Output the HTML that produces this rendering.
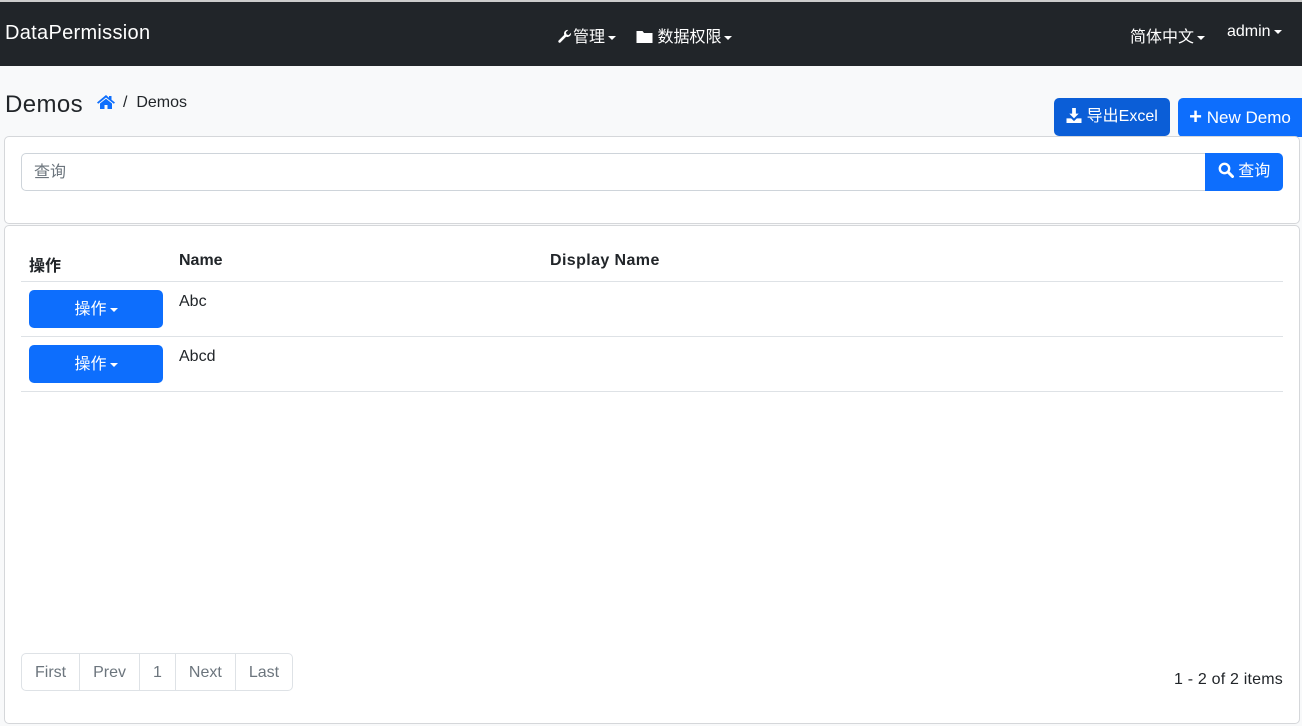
<!DOCTYPE html>
<html><head><meta charset="utf-8"><style>
*{box-sizing:border-box;margin:0;padding:0}
body{width:1302px;height:726px;background:#f8f9fa;font-family:"Liberation Sans","Noto Sans CJK SC",sans-serif;color:#212529;position:relative;overflow:hidden;font-size:16px}
.top{position:absolute;left:0;top:0;width:1302px;height:2px;background:#ccc}
.nav{position:absolute;left:0;top:2px;width:1302px;height:64px;background:#212529;color:#fff}
.nav span{position:absolute;top:22px;font-size:16px;white-space:nowrap}
.caret{display:inline-block;width:0;height:0;border-left:4px solid transparent;border-right:4px solid transparent;border-top:4px solid #fff;vertical-align:middle;margin-left:3px}
.btn{position:absolute;border-radius:5px;color:#fff;font-size:16px;text-align:center;line-height:38px}
.card{position:absolute;background:#fff;border:1px solid #d5d7da;border-radius:5px}
.pg{position:absolute;left:21px;top:653px;height:38px;display:flex;border:1px solid #dee2e6;border-radius:5px;background:#fff}
.pg div{padding:0 13px;line-height:36px;color:#6c757d;border-left:1px solid #dee2e6}
.pg div:first-child{border-left:none}
.row{position:absolute;left:21px;width:1262px;border-bottom:1px solid #dee2e6}
.ob{position:absolute;left:29px;width:134px;height:38px;background:#0d6efd;border-radius:5px;color:#fff;text-align:center;line-height:38px;font-size:16px}
</style></head><body>
<div class="top"></div>
<div class="nav">
<span style="left:5px;top:20px;font-size:20px;letter-spacing:0.3px">DataPermission</span>
<span style="left:556px;top:21px"><svg width="17" height="15" viewBox="0 0 16 16" style="vertical-align:-2px"><path d="M15 4.5a4 4 0 0 1-5.3 3.8L3.5 14.5a1.5 1.5 0 0 1-2-2l6.2-6.2A4 4 0 0 1 12 1l-2.5 2.5.7 2.3 2.3.7L15 4z" fill="#fff"/></svg>管理<i class="caret"></i></span>
<span style="left:636px;top:21px"><svg width="17" height="14" viewBox="0 0 16 14" style="vertical-align:-1px"><path d="M0 2h6l1.5 2H16v10H0z" fill="#fff"/></svg> 数据权限<i class="caret"></i></span>
<span style="left:1130px;top:21px">简体中文<i class="caret"></i></span>
<span style="left:1227px;top:21px">admin<i class="caret"></i></span>
</div>
<div style="position:absolute;left:5px;top:91px;font-size:24px;letter-spacing:0.4px">Demos</div>
<svg style="position:absolute;left:96px;top:94px" width="20" height="16" viewBox="0 0 20 16"><path d="M10 1L1 8.5l1.2 1.2L10 3.5l7.8 6.2L19 8.5 15.5 5.7V2h-2.5v1.7z M4 9.5V15h4.5v-4h3v4H16V9.5L10 4.8z" fill="#0d6efd"/></svg>
<div style="position:absolute;left:123px;top:94px;font-size:16px;color:#212529">/ &nbsp;Demos</div>
<div class="btn" style="left:1054px;top:98px;width:116px;background:#0b5ed7"><svg width="16" height="15" viewBox="0 0 16 16" style="vertical-align:-2px"><path d="M6 0h4v6h3l-5 5-5-5h3z M0 11h5l3 3 3-3h5v5H0z" fill="#fff"/></svg> 导出Excel</div>
<div class="btn" style="left:1178px;top:98px;width:124px;background:#0d6efd;border-radius:5px 0 0 5px;font-size:17px"><b style="font-size:22px;vertical-align:-1px">+</b> New Demo</div>
<div class="card" style="left:4px;top:136px;width:1296px;height:88px"></div>
<div style="position:absolute;left:21px;top:153px;width:1186px;height:38px;border:1px solid #ced4da;border-radius:5px 0 0 5px;background:#fff;color:#6c757d;line-height:38px;padding-left:12px;font-size:16px">查询</div>
<div class="btn" style="left:1205px;top:153px;width:78px;background:#0d6efd;border-radius:0 5px 5px 0"><svg width="16" height="16" viewBox="0 0 16 16" style="vertical-align:-2px"><circle cx="6.5" cy="6.5" r="4.7" fill="none" stroke="#fff" stroke-width="2.4"/><path d="M10 10l4.5 4.5" stroke="#fff" stroke-width="3" stroke-linecap="round"/></svg> 查询</div>
<div class="card" style="left:4px;top:225px;width:1296px;height:499px"></div>
<div class="row" style="top:244px;height:38px;font-weight:bold">
<span style="position:absolute;left:8px;top:8px">操作</span><span style="position:absolute;left:158px;top:8px">Name</span><span style="position:absolute;left:529px;top:8px;letter-spacing:0.4px">Display Name</span></div>
<div class="row" style="top:282px;height:55px"><span style="position:absolute;left:158px;top:11px">Abc</span></div>
<div class="row" style="top:337px;height:55px"><span style="position:absolute;left:158px;top:11px">Abcd</span></div>
<div class="ob" style="top:290px;line-height:40px">操作<i class="caret"></i></div>
<div class="ob" style="top:345px;line-height:40px">操作<i class="caret"></i></div>
<div class="pg" style="top:653px;line-height:38px"><div style="line-height:38px">First</div><div style="line-height:38px">Prev</div><div style="line-height:38px">1</div><div style="line-height:38px">Next</div><div style="line-height:38px">Last</div></div>
<div style="position:absolute;right:19px;top:671px;letter-spacing:0.2px">1 - 2 of 2 items</div>
</body></html>
